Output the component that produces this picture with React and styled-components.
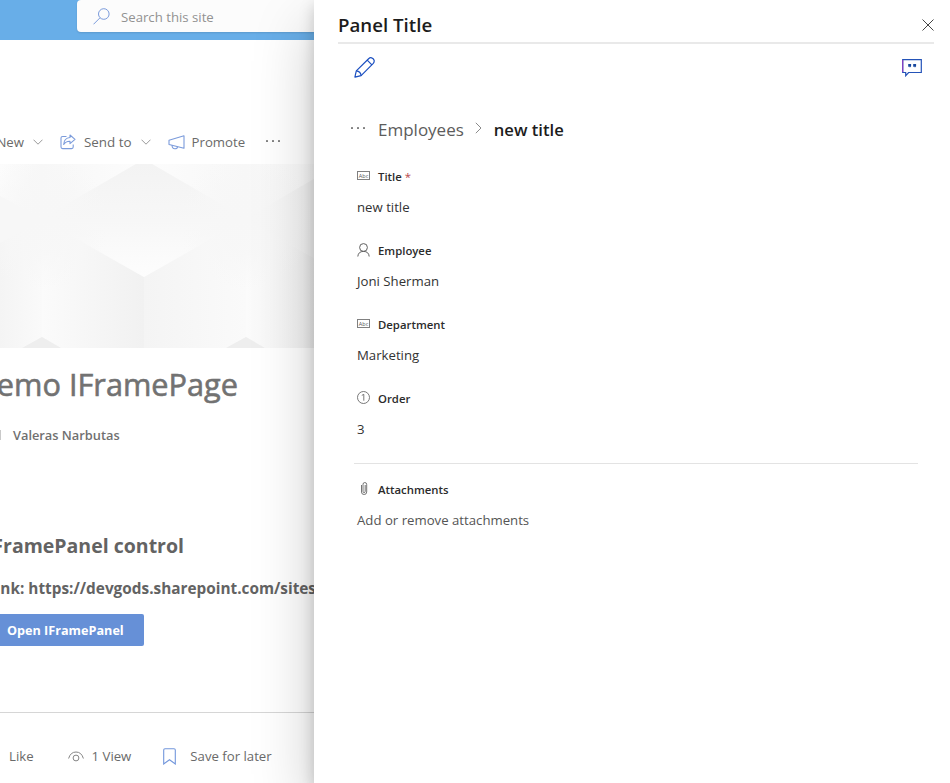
import React from "react";
import styled, { createGlobalStyle } from "styled-components";

const Global = createGlobalStyle`
  * { box-sizing: border-box; }
  body { margin: 0; background: #fff; overflow: hidden; font-family: "Open Sans", "Noto Sans", sans-serif; }
  svg { display: block; flex: none; }
`;

const Screen = styled.div`
  display: grid;
  grid-template-columns: 314px 636px;
  width: 950px;
  height: 783px;
  overflow: hidden;
`;

const Text = styled.span`
  display: block;
  flex: none;
  white-space: nowrap;
  padding-top: ${(p) => p.$drop || 0}px;
  font-size: ${(p) => p.$size || 13.2}px;
  font-weight: ${(p) => p.$weight || 400};
  color: ${(p) => p.$color || "#6a6a69"};
  line-height: ${(p) => p.$line || 20}px;
`;
const PageTitle = styled(Text)`
  -webkit-text-stroke: 0.6px #727272;
`;

const Page = styled.div`
  display: flex;
  flex-direction: column;
  min-width: 0;
  overflow: hidden;
`;
const SuiteBar = styled.header`
  flex: none;
  height: 40px;
  padding-left: 77px;
  background: #68aee8;
`;
const SearchBox = styled.div`
  display: flex;
  align-items: center;
  gap: 11px;
  height: 32px;
  padding: 1px 0 0 16px;
  border-radius: 4px 0 0 4px;
  background: #fcfcfc;
  box-shadow: 0 1px 2px rgba(0, 0, 0, 0.12);
`;
const CommandBar = styled.div`
  flex: none;
  display: flex;
  align-items: center;
  height: 44px;
  margin-top: 80px;
`;
const Lead = styled.div`
  flex: none;
  display: flex;
  justify-content: flex-end;
  width: ${(p) => p.$w}px;
  margin-top: ${(p) => p.$top || 0}px;
`;
const Gap = styled.span`
  flex: none;
  width: ${(p) => p.$w}px;
`;
const Byline = styled.div`
  flex: none;
  display: flex;
  align-items: center;
  height: 20px;
  gap: 12px;
  margin-top: 21px;
`;
const AvatarEdge = styled.span`
  width: 1px;
  height: 10px;
  background: #c9c9c9;
`;
const PrimaryButton = styled.button`
  flex: none;
  display: flex;
  align-items: center;
  width: 144px;
  height: 32px;
  margin-top: 16px;
  padding: 0 0 0 7px;
  border: 0;
  border-radius: 0 2px 2px 0;
  background: #6690d7;
  font-family: inherit;
`;
const SocialBar = styled.footer`
  flex: none;
  display: flex;
  align-items: center;
  height: 71px;
  margin-top: 66px;
  padding: 16px 0 0 9px;
  border-top: 1px solid #d6d6d6;
`;

const Panel = styled.aside`
  position: relative;
  display: flex;
  flex-direction: column;
  padding: 0 16px 0 24px;
  background: #fff;
  box-shadow: 0 25.6px 57.6px rgba(0, 0, 0, 0.22), 0 4.8px 14.4px rgba(0, 0, 0, 0.18);
`;
const PanelHeader = styled.header`
  display: flex;
  align-items: center;
  justify-content: space-between;
  height: 44px;
  padding: 8px 0 0;
  border-bottom: 2px solid #e9e9e9;
`;
const Tools = styled.div`
  display: flex;
  align-items: flex-start;
  justify-content: space-between;
  height: 48px;
  padding: 13px 12px 0 16px;
`;
const ToolButton = styled.button`
  padding: ${(p) => p.$top || 0}px 0 0;
  border: 0;
  background: none;
`;
const Breadcrumb = styled.nav`
  display: flex;
  align-items: center;
  height: 30px;
  margin-top: 22px;
  padding-left: 13px;
`;
const Fields = styled.div`
  display: flex;
  flex-direction: column;
  gap: 12px;
  margin-top: ${(p) => p.$top}px;
  padding-left: 19px;
`;
const Field = styled.div`
  display: flex;
  flex-direction: column;
`;
const Label = styled.div`
  display: grid;
  grid-template-columns: 21px auto auto;
  justify-content: start;
  align-items: center;
  height: 25px;
`;
const Value = styled.div`
  display: flex;
  align-items: center;
  height: 37px;
`;
const Rule = styled.hr`
  width: 564px;
  height: 1px;
  margin: 16px 0 0 16px;
  border: 0;
  background: #e3e3e3;
`;

const Svg = ({ w, h, c, sw = 1, children }) => (
  <svg width={w} height={h} viewBox={`0 0 ${w} ${h}`} fill="none" stroke={c} strokeWidth={sw}>{children}</svg>
);
const BLUE = "#7b9bdb";
const SearchIcon = () => (
  <Svg w={17} h={17} c={BLUE}><circle cx="10.8" cy="6" r="5.3" /><path d="M7 9.8L.5 16.3" /></Svg>
);
const Chevron = () => <Svg w={10} h={6} c="#9a9a9a"><path d="M.5.7L5 5.2 9.5.7" /></Svg>;
const ShareIcon = () => (
  <Svg w={16} h={16} c={BLUE} sw={1.1}>
    <path d="M6.500 2.500H2.600Q1 2.500 1 4.100V13q0 1.600 1.600 1.600h9Q13.200 14.600 13.200 13v-2.500" />
    <path d="M10 1l5 4.300-5 4.300V7.200Q5.800 7 3.700 10.500 4 4 10 3.500z" strokeLinejoin="round" />
  </Svg>
);
const MegaphoneIcon = () => (
  <Svg w={17} h={15} c={BLUE} sw={1.1}>
    <path d="M16 .8v12.400L1 9.500V5.200z" strokeLinejoin="round" /><path d="M4 10.300q.2 3.500 2.800 3.500T9.500 11.700" />
  </Svg>
);
const Dots = ({ c, w = 14 }) => (
  <svg width={w} height="4" viewBox={`0 0 ${w} 4`} fill={c}>
    <rect x="0" y="0" width="2" height="2" rx=".4" /><rect x={w / 2 - 1} y="0" width="2" height="2" rx=".4" /><rect x={w - 2} y="0" width="2" height="2" rx=".4" />
  </svg>
);
const EyeIcon = () => (
  <Svg w={16} h={11} c="#858585"><path d="M.6 7.500Q2.500 1 8 1t7.400 6.500" /><circle cx="8" cy="7" r="2.900" /></Svg>
);
const BookmarkIcon = () => (
  <Svg w={13} h={17} c="#7397dc" sw={1.1}><path d="M.7 16V2Q.7.700 2 .7h9q1.300 0 1.300 1.300v14L6.500 11.700z" /></Svg>
);
const CloseIcon = () => <Svg w={12} h={12} c="#444"><path d="M.5.500l11 11M11.500.5l-11 11" /></Svg>;
const PencilIcon = () => (
  <Svg w={21} h={21} c="#1b4fc0" sw={1.2}>
    <path d="M.9 20.200l1.400-6.300L14.600 1.700Q16 .4 17.600.800 19.500 1.300 20.100 3.200 20.500 5 19.300 6.300L7.100 18.600z" strokeLinejoin="round" />
    <path d="M2.300 13.900Q6.600 14.300 7.100 18.600M13.200 3.200l4.700 4.700" />
  </Svg>
);
const QuoteIcon = () => (
  <Svg w={20} h={18} c="#2453b8" sw={1.2}>
    <path d="M.7.700h18.600v12.800H6.600L3.700 16.700v-3.200h-3z" />
    <path d="M6.200 5h2.900v2.300L7.800 8.800V7.700H6.200zM11.200 5h2.900v2.300l-1.300 1.500V7.700h-1.600z" fill="#17479e" stroke="none" />
    <path d="M.7 1v12" stroke="#8a3fc0" />
  </Svg>
);
const CrumbChevron = () => <Svg w={7} h={14} c="#8a8a8a"><path d="M.8.800L6 6 .8 11.200" /></Svg>;
const AbcText = styled.text`
  font-family: "Open Sans", sans-serif;
  font-size: 6px;
`;
const AbcIcon = () => (
  <Svg w={13} h={9} c="#808080"><rect x=".5" y=".5" width="12" height="8" />
    <AbcText x="1.800" y="6.600" textLength="9.500" lengthAdjust="spacingAndGlyphs" fill="#555" stroke="none">Abc</AbcText>
  </Svg>
);
const PersonIcon = () => (
  <Svg w={13} h={14} c="#606060"><circle cx="6.500" cy="4.500" r="3.900" /><path d="M.8 13.500Q1.300 8.400 6.500 8.400t5.700 5.100" /></Svg>
);
const NumberIcon = () => (
  <Svg w={13} h={13} c="#6a6a6a" sw={0.9}><circle cx="6.500" cy="6.500" r="6" /><path d="M4.800 4.400L6.800 3.300v6.400" /></Svg>
);
const ClipIcon = () => (
  <Svg w={13} h={13} c="#666" sw={0.9}>
    <path d="M4.500 3v7q0 2.500 2.600 2.500T9.700 10V2.600Q9.700.500 7.800.500T6 2.600v6.800q0 1.200 1.100 1.200t1.100-1.200V3" />
  </Svg>
);

const Banner = () => (
  <svg width="314" height="184" viewBox="0 0 314 184">
    <defs>
      <linearGradient id="top" x1="0" y1="0" x2="0" y2="1"><stop offset="0" stopColor="#f3f3f3" /><stop offset=".5" stopColor="#f7f7f7" /><stop offset="1" stopColor="#fdfdfd" /></linearGradient>
      <linearGradient id="left"><stop offset="0" stopColor="#fbfbfb" /><stop offset="1" stopColor="#f1f1f1" /></linearGradient>
      <linearGradient id="right"><stop offset="0" stopColor="#f4f4f4" /><stop offset="1" stopColor="#fafafa" /></linearGradient>
      <linearGradient id="upL"><stop offset="0" stopColor="#f7f7f7" /><stop offset="1" stopColor="#fcfcfc" /></linearGradient>
      <linearGradient id="upR"><stop offset="0" stopColor="#fcfcfc" /><stop offset="1" stopColor="#f7f7f7" /></linearGradient>
      <radialGradient id="joint"><stop offset="0" stopColor="#f7f7f7" /><stop offset=".4" stopColor="#f7f7f7" stopOpacity=".85" /><stop offset="1" stopColor="#f7f7f7" stopOpacity="0" /></radialGradient>
    </defs>
    <rect width="314" height="184" fill="#f7f7f7" />
    <path d="M0 0h42v54L0 32z" fill="url(#upR)" />
    <path d="M42 0h94L42 54z" fill="url(#upL)" />
    <path d="M152 0h94v54z" fill="url(#upR)" />
    <path d="M246 0h68v15l-68 39z" fill="url(#upL)" />
    <path d="M0 79l42-23v117l-20 11H0z" fill="url(#right)" />
    <path d="M42 56l102 57v71H61l-19-11z" fill="url(#left)" />
    <path d="M246 56l-102 57v71h82l20-11z" fill="url(#right)" />
    <path d="M246 56l68 38v90h-49l-19-11z" fill="url(#left)" />
    <path d="M136 0h16l94 55-102 58L42 55z" fill="url(#top)" />
    <path d="M246 55l68-40v79z" fill="#f5f5f5" />
    <circle cx="42" cy="58" r="68" fill="url(#joint)" />
    <circle cx="246" cy="58" r="68" fill="url(#joint)" />
    <path d="M22 184l20-11 19 11zM226 184l20-11 19 11z" fill="#eeeeee" />
  </svg>
);

const DARK = "#2b2b2b";
const fields = [
  { icon: <AbcIcon />, label: "Title", required: true, value: "new title" },
  { icon: <PersonIcon />, label: "Employee", value: "Joni Sherman" },
  { icon: <AbcIcon />, label: "Department", value: "Marketing" },
  { icon: <NumberIcon />, label: "Order", value: "3" },
];
const FieldView = ({ icon, label, required, value, muted }) => (
  <Field>
    <Label>
      {icon}
      <Text $size={11.35} $weight={600} $drop={2} $color={DARK}>{label}</Text>
      {required && <Text $size={11.35} $drop={2} $color="#b8484c">&nbsp;*</Text>}
    </Label>
    <Value><Text $color={muted ? "#555" : "#333"}>{value}</Text></Value>
  </Field>
);

export default function App() {
  return (
    <>
      <Global />
      <Screen>
        <Page>
          <SuiteBar><SearchBox><SearchIcon /><Text $color="#929292">Search this site</Text></SearchBox></SuiteBar>
          <CommandBar>
            <Lead $w={24}><Text>New</Text></Lead><Gap $w={9} /><Chevron /><Gap $w={17} />
            <ShareIcon /><Gap $w={8} /><Text $size={13.4}>Send to</Text><Gap $w={9} /><Chevron /><Gap $w={17} />
            <MegaphoneIcon /><Gap $w={7} /><Text>Promote</Text><Gap $w={21} /><Dots c="#777" />
          </CommandBar>
          <Banner />
          <Lead $w={238} $top={16}><PageTitle $size={30.7} $line={40} $color="#727272">Demo IFramePage</PageTitle></Lead>
          <Byline><AvatarEdge /><Text $weight={600} $size={12.8} $color="#707070">Valeras Narbutas</Text></Byline>
          <Lead $w={184} $top={87}><Text $size={19.5} $weight={700} $line={28} $color="#636363">IFramePanel control</Text></Lead>
          <Lead $w={316} $top={18}><Text $size={15.35} $weight={700} $color="#636363">Link: https://devgods.sharepoint.com/sites</Text></Lead>
          <PrimaryButton><Text $weight={700} $size={12.65} $color="#fff">Open IFramePanel</Text></PrimaryButton>
          <SocialBar>
            <Text>Like</Text><Gap $w={34} /><EyeIcon /><Gap $w={8} /><Text>1 View</Text><Gap $w={32} />
            <BookmarkIcon /><Gap $w={14} /><Text>Save for later</Text>
          </SocialBar>
        </Page>
        <Panel>
          <PanelHeader><Text $size={18.7} $weight={600} $line={28} $color="#1c1c1c">Panel Title</Text><CloseIcon /></PanelHeader>
          <Tools>
            <ToolButton><PencilIcon /></ToolButton>
            <ToolButton $top={2}><QuoteIcon /></ToolButton>
          </Tools>
          <Breadcrumb>
            <Dots c="#777" w={14} /><Gap $w={13} /><Text $size={17} $line={26} $drop={2} $color="#5c5c5c">Employees</Text><Gap $w={11} />
            <CrumbChevron /><Gap $w={12} /><Text $size={16.6} $weight={600} $line={26} $drop={2} $color="#1c1c1c">new title</Text>
          </Breadcrumb>
          <Fields $top={19}>{fields.map((f) => <FieldView key={f.label} {...f} />)}</Fields>
          <Rule />
          <Fields $top={12}><FieldView icon={<ClipIcon />} label="Attachments" value="Add or remove attachments" muted /></Fields>
        </Panel>
      </Screen>
    </>
  );
}
